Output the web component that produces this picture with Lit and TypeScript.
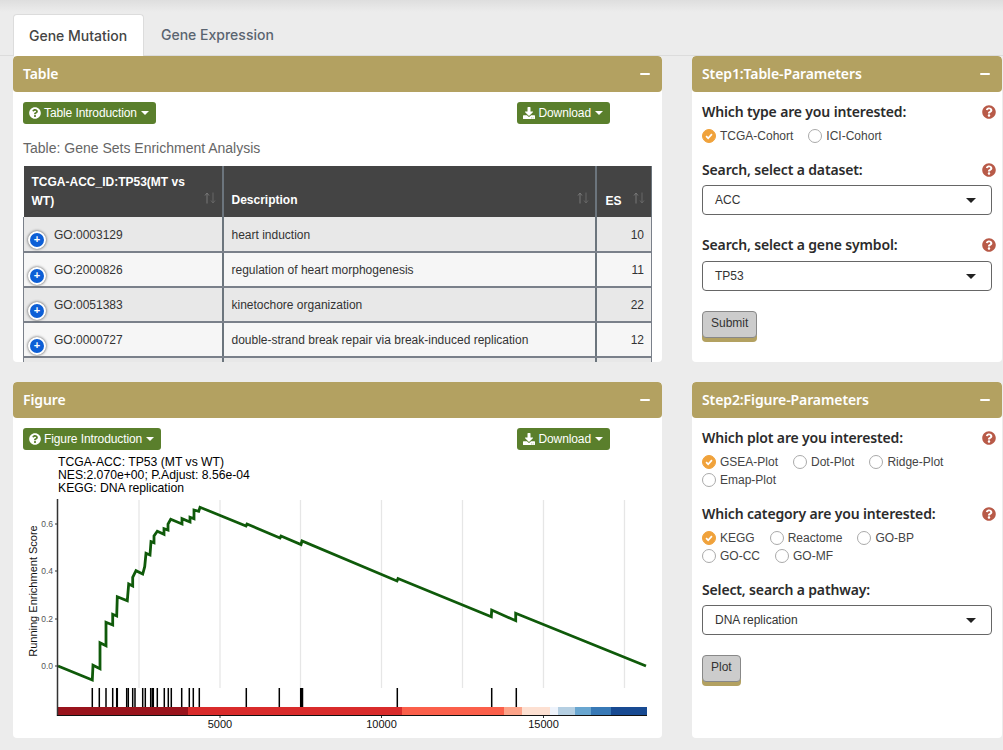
import { LitElement, html, css, svg } from "lit";
import { customElement } from "lit/decorators.js";

const Q = "M504 256c0 136.997-111.043 248-248 248S8 392.997 8 256C8 119.083 119.043 8 256 8s248 111.083 248 248zM262.655 90c-54.497 0-89.255 22.957-116.549 63.758-3.536 5.286-2.353 12.415 2.715 16.258l34.699 26.31c5.205 3.947 12.621 3.008 16.665-2.122 17.864-22.658 30.113-35.797 57.303-35.797 20.429 0 45.698 13.148 45.698 32.958 0 14.976-12.363 22.667-32.534 33.976C247.128 238.528 216 254.941 216 296v4c0 6.627 5.373 12 12 12h56c6.627 0 12-5.373 12-12v-1.333c0-28.462 83.186-29.647 83.186-106.667 0-58.002-60.165-102-116.531-102zM256 338c-25.365 0-46 20.635-46 46 0 25.364 20.635 46 46 46s46-20.636 46-46c0-25.365-20.635-46-46-46z";
const D = "M216 0h80c13.3 0 24 10.7 24 24v168h87.7c17.8 0 26.7 21.5 14.1 34.1L269.7 378.3c-7.5 7.5-19.8 7.5-27.3 0L90.1 226.1c-12.6-12.6-3.7-34.1 14.1-34.1H192V24c0-13.3 10.7-24 24-24zm296 376v112c0 13.3-10.7 24-24 24H24c-13.3 0-24-10.7-24-24V376c0-13.3 10.7-24 24-24h146.7l49 49c20.1 20.1 52.5 20.1 72.6 0l49-49H488c13.3 0 24 10.7 24 24zm-124 88c0-11-9-20-20-20s-20 9-20 20 9 20 20 20 20-9 20-20zm64 0c0-11-9-20-20-20s-20 9-20 20 9 20 20 20 20-9 20-20z";

const icon = (d: string, cls: string) =>
  html`<svg class=${cls} viewBox="0 0 512 512" fill="currentColor"><path d=${d}></path></svg>`;

const CURVE = "58,666 92.3,680 93,665.3 100,668.7 100,642.7 106,645.7 106,622.3 112.7,625 112.7,614.3 116.7,616 117.3,596.7 127.3,600.7 128.7,584 132.7,586 132.7,577.3 136,570.7 142.7,574 144.7,566.7 146,553.3 150,555 151,541.7 154,542.7 154,536 157.3,531.3 164,534.3 164,528.7 168,530 168,524 170.7,519.3 182,524 182,518.7 190,522 190,517.3 194,518.7 194,510 198.7,511.3 200,507.3 246,526 247,524 280,538 281,536 301,544.5 302,541 397,581 398,578.5 491.3,616.7 491.7,610 515.7,620.7 515.7,613.3 646,666";
const TICKS = [92.3, 99.3, 106, 112.7, 116.7, 117.3, 126.7, 128.3, 132.7, 135, 142.7, 145.3, 150.7, 152.3, 153.3, 157.3, 164.3, 168.3, 171.3, 181.7, 189.3, 193.3, 199.3, 246.3, 279.3, 300.7, 301.5, 302.5, 397.3, 491.7, 516.3];
const GRID = [139, 220, 300.5, 381.5, 462.5, 543.5, 624.5];
const BAR: [number, number, string][] = [
  [58, 188, "#99131c"], [188, 402, "#d92b2b"], [402, 504, "#fb5f4a"], [504, 522, "#fca389"],
  [522, 550, "#fde0d2"], [550, 558, "#eef3fb"], [558, 575, "#b5cfe2"], [575, 591, "#69a6d0"],
  [591, 611, "#3879b6"], [611, 647, "#184a92"],
];

const ROWS = [
  ["GO:0003129", "heart induction", "10"],
  ["GO:2000826", "regulation of heart morphogenesis", "11"],
  ["GO:0051383", "kinetochore organization", "22"],
  ["GO:0000727", "double-strand break repair via break-induced replication", "12"],
  ["", "", ""],
];

@customElement("app-root")
export class AppRoot extends LitElement {
  static styles = css`
    :host { display: block; width: 1003px; height: 750px; overflow: hidden; background: #ececec; position: relative;
      font-family: "Liberation Sans", Arial, sans-serif; font-size: 12px; color: #333; }
    .shade { position: absolute; left: 0; right: 0; top: 0; height: 12px; background: linear-gradient(#dedede, #ececec); }
    .page { position: relative; padding-top: 14px; display: flex; flex-direction: column; }
    .tabs { display: flex; height: 41px; border-bottom: 1px solid #dcdcdc; padding-left: 13px; }
    .tab { font: 500 14px Inter, "Liberation Sans", sans-serif; color: #5a6470; padding: 0 17px; display: flex; align-items: center; height: 41px; box-sizing: border-box; }
    .tab.on { background: #fff; color: #444; border: 1px solid #dcdcdc; border-bottom: 0; border-radius: 4px 4px 0 0; width: 131px; height: 42px; padding: 0 15px; }
    .grid { display: grid; grid-template-columns: 649px 310px; grid-template-rows: 306px 356px; gap: 20px 30px; padding-left: 13px; }
    .panel { background: #fff; border-radius: 4px; display: flex; flex-direction: column; overflow: hidden; }
    .head { height: 36px; flex: none; background: #b3a161; color: #fff; display: flex; align-items: center; justify-content: space-between; padding: 0 10px 1px; border-radius: 4px; box-sizing: border-box;
      font: 600 14px "Noto Sans", "Open Sans", sans-serif; letter-spacing: -0.1px; }
    .minus { width: 10px; height: 2px; background: #fff; border-radius: 1px; margin-right: 2px; }
    .body { flex: 1; padding: 10px 10px 0; overflow: hidden; min-height: 0; }
    .btnrow { display: flex; justify-content: space-between; padding-right: 42px; }
    .gbtn { display: inline-flex; align-items: center; height: 22px; background: #5a7f2c; color: #fff; border-radius: 3px; padding: 0 7px 0 6px; box-sizing: border-box; font-size: 12px; gap: 3px; letter-spacing: -0.1px; }
    .ico { width: 12px; height: 12px; flex: none; }
    .caret { width: 0; height: 0; border: 4px solid transparent; border-top-color: #fff; border-bottom: 0; margin-left: 1px; }
    .cap { font-size: 14px; color: #666; margin: 15px 0 9px; line-height: 18px; }
    table { border-collapse: collapse; table-layout: fixed; width: 628px; font-size: 12px; }
    th { background: #444; color: #fff; text-align: left; font-weight: 700; vertical-align: bottom; padding: 7px 8px 6px 8px; line-height: 19px; box-sizing: border-box; position: relative; border-right: 2px solid #6c757d; }
    th:last-child { border-right: 1px solid #6c757d; padding-left: 9px; }
    th:nth-child(2) { padding-bottom: 7px; padding-top: 6px; }
    td { height: 35px; box-sizing: border-box; padding: 0 8px 0 8px; border-right: 2px solid #6c757d; border-bottom: 2px solid #7a808a; position: relative; color: #333; }
    td:first-child { padding-left: 30px; border-left: 1px solid #7a808a; }
    td:last-child { text-align: right; border-right: 1px solid #7a808a; padding-right: 7px; }
    th:first-child { padding-left: 8px; padding-right: 30px; }
    tbody tr:first-child td { padding-top: 2px; }
    tr.odd td { background: #e8e8e8; }
    tr.even td { background: #f6f6f6; }
    .sort { position: absolute; right: 6px; bottom: 13px; width: 12px; height: 12px; display: block; }
    .plus { position: absolute; left: 4px; top: 14px; width: 14px; height: 14px; border-radius: 50%; background: #0d5fd6; border: 2px solid #fff; box-shadow: 0 0 3px #444; color: #fff; font-size: 11px; line-height: 13px; text-align: center; font-weight: 700; }
    .chart { display: block; margin-left: -10px; }
    .chart text { font-family: "Liberation Sans", Arial, sans-serif; }
    .params { padding: 10px 10px 0; flex: 1; }
    .lab { display: flex; justify-content: space-between; align-items: center; font: 600 14px "Noto Sans", "Open Sans", sans-serif; color: #2b2b2b; height: 20px; line-height: 20px; letter-spacing: -0.15px; }
    .q { width: 14px; height: 14px; color: #b85a48; margin-right: -4px; flex: none; }
    .radios { display: flex; flex-wrap: wrap; column-gap: 15px; margin-top: 5px; }
    .brk { flex-basis: 100%; height: 0; }
    .r { display: flex; align-items: center; height: 18px; gap: 4px; color: #444; font-size: 12px; }
    .dot { width: 14px; height: 14px; border-radius: 50%; border: 1px solid #aaa; box-sizing: border-box; background: #fff; display: block; }
    .dot.on { background: #f0a23b; border-color: #f0a23b; }
    .sel { height: 30px; box-sizing: border-box; border: 1px solid #666; border-radius: 4px; display: flex; align-items: center; justify-content: space-between; padding: 0 15px 0 12px; color: #333; font-size: 12px; margin-top: 5px; }
    .sel.low { margin-top: 6px; }
    .tri { width: 0; height: 0; border: 5px solid transparent; border-top: 5px solid #222; border-bottom: 0; }
    .act { display: inline-block; background: #ccc; border: 1px solid #888; border-radius: 4px; padding: 0 8px; height: 27px; line-height: 23px; box-sizing: border-box; color: #333; box-shadow: 0 4px 0 #b3a161; font-size: 12px; }
    .s1 { margin-top: 15px; }
    .s2 { margin-top: 20px; }
  `;

  private radio(label: string, on = false) {
    return html`<span class="r"><svg class="dot ${on ? "on" : ""}" viewBox="0 0 14 14">${on ? svg`<path d="M3.6 7.2 6 9.6 10.4 4.8" fill="none" stroke="#fff" stroke-width="2"></path>` : ""}</svg>${label}</span>`;
  }

  private chart() {
    return html`<svg class="chart" width="649" height="288" viewBox="13 450 649 288">
      ${GRID.map((x) => svg`<line x1=${x} x2=${x} y1="500" y2="688" stroke="#e6e6e6" stroke-width="1.3"></line>`)}
      <g font-size="12.2" fill="#000">
        <text x="58" y="466">TCGA-ACC: TP53 (MT vs WT)</text>
        <text x="58" y="479">NES:2.070e+00; P.Adjust: 8.56e-04</text>
        <text x="58" y="492">KEGG: DNA replication</text>
      </g>
      ${TICKS.map((x) => svg`<line x1=${x} x2=${x} y1="688" y2="707" stroke="#000" stroke-width="1.5"></line>`)}
      ${BAR.map(([a, b, c]) => svg`<rect x=${a} y="707" width=${b - a} height="8" fill=${c}></rect>`)}
      <polyline points=${CURVE} fill="none" stroke="#0f5a0a" stroke-width="2.8" stroke-linejoin="miter"></polyline>
      <line x1="57.5" x2="57.5" y1="499" y2="716" stroke="#333" stroke-width="1.5"></line>
      <line x1="57" x2="647" y1="715.5" y2="715.5" stroke="#111" stroke-width="1.2"></line>
      ${[[524, "0.6"], [571, "0.4"], [619, "0.2"], [666, "0.0"]].map(([y, t]) => svg`
        <line x1="55" x2="57" y1=${y} y2=${y} stroke="#333"></line>
        <text x="53" y=${Number(y) + 3} text-anchor="end" font-size="8.5" fill="#555">${t}</text>`)}
      ${[[220, "5000"], [381.5, "10000"], [543.5, "15000"]].map(([x, t]) => svg`
        <line x1=${x} x2=${x} y1="716" y2="718" stroke="#333"></line>
        <text x=${x} y="728" text-anchor="middle" font-size="11" fill="#111">${t}</text>`)}
      <text transform="translate(37 591) rotate(-90)" text-anchor="middle" font-size="11" fill="#111">Running Enrichment Score</text>
    </svg>`;
  }

  render() {
    const head = (t: string) => html`<div class="head"><span>${t}</span><span class="minus"></span></div>`;
    const sort = html`<svg class="sort" viewBox="0 0 12 12" fill="none" stroke-width="1">
      <path d="M3 11.5V1M1 3.5 3 1 5 3.5" stroke="#777"></path><path d="M9 .5V11M7 8.5 9 11 11 8.5" stroke="#666"></path></svg>`;
    const btn = (d: string, t: string) => html`<span class="gbtn">${icon(d, "ico")}${t}<span class="caret"></span></span>`;
    return html`
      <div class="shade"></div>
      <div class="page">
        <div class="tabs"><div class="tab on">Gene Mutation</div><div class="tab">Gene Expression</div></div>
        <div class="grid">
          <section class="panel">
            ${head("Table")}
            <div class="body">
              <div class="btnrow">${btn(Q, "Table Introduction")}${btn(D, "Download")}</div>
              <div class="cap">Table: Gene Sets Enrichment Analysis</div>
              <table>
                <colgroup><col style="width:199px" /><col style="width:373px" /><col style="width:56px" /></colgroup>
                <thead><tr><th>TCGA-ACC_ID:TP53(MT vs WT)${sort}</th><th>Description${sort}</th><th>ES${sort}</th></tr></thead>
                <tbody>
                  ${ROWS.map((r, i) => html`<tr class=${i % 2 ? "even" : "odd"}>
                    <td>${r[0] ? html`<span class="plus">+</span>` : ""}${r[0]}</td><td>${r[1]}</td><td>${r[2]}</td></tr>`)}
                </tbody>
              </table>
            </div>
          </section>
          <section class="panel">
            ${head("Step1:Table-Parameters")}
            <div class="params">
              <div class="lab">Which type are you interested:${icon(Q, "q")}</div>
              <div class="radios">${this.radio("TCGA-Cohort", true)}${this.radio("ICI-Cohort")}</div>
              <div class="lab s1">Search, select a dataset:${icon(Q, "q")}</div>
              <div class="sel">ACC<span class="tri"></span></div>
              <div class="lab s2">Search, select a gene symbol:${icon(Q, "q")}</div>
              <div class="sel low">TP53<span class="tri"></span></div>
              <div class="s2"><span class="act">Submit</span></div>
            </div>
          </section>
          <section class="panel">
            ${head("Figure")}
            <div class="body">
              <div class="btnrow">${btn(Q, "Figure Introduction")}${btn(D, "Download")}</div>
              ${this.chart()}
            </div>
          </section>
          <section class="panel">
            ${head("Step2:Figure-Parameters")}
            <div class="params">
              <div class="lab">Which plot are you interested:${icon(Q, "q")}</div>
              <div class="radios">${this.radio("GSEA-Plot", true)}${this.radio("Dot-Plot")}${this.radio("Ridge-Plot")}<span class="brk"></span>${this.radio("Emap-Plot")}</div>
              <div class="lab s1">Which category are you interested:${icon(Q, "q")}</div>
              <div class="radios">${this.radio("KEGG", true)}${this.radio("Reactome")}${this.radio("GO-BP")}<span class="brk"></span>${this.radio("GO-CC")}${this.radio("GO-MF")}</div>
              <div class="lab s1">Select, search a pathway:</div>
              <div class="sel">DNA replication<span class="tri"></span></div>
              <div class="s2"><span class="act">Plot</span></div>
            </div>
          </section>
        </div>
      </div>`;
  }
}
